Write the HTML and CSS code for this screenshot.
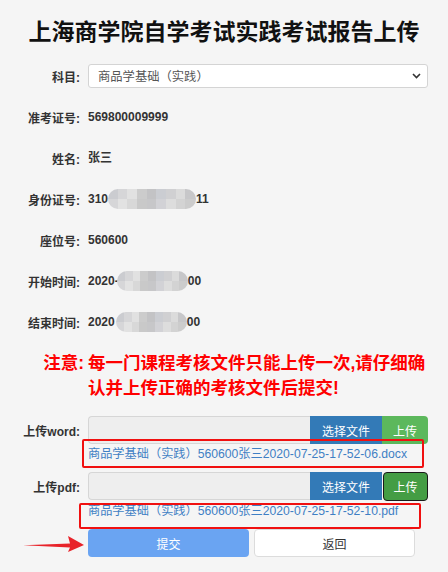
FILE: index.html
```html
<!DOCTYPE html>
<html lang="zh-CN">
<head>
<meta charset="utf-8">
<title>上海商学院自学考试实践考试报告上传</title>
<link rel="stylesheet" href="styles.css">
</head>
<body>
<div class="page">
  <h1 class="title">上海商学院自学考试实践考试报告上传</h1>
  <div class="form">
    <div class="row subject">
      <div class="label">科目:</div>
      <div class="select">
        <span class="select-text">商品学基础<span class="fw">（</span>实践<span class="fw">）</span></span>
        <svg class="chev" width="9" height="6" viewBox="0 0 9 6"><path d="M1 1 L4.5 4.5 L8 1" fill="none" stroke="#333" stroke-width="1.6"/></svg>
      </div>
    </div>
    <div class="row info first">
      <div class="label">准考证号:</div>
      <div class="value">569800009999</div>
    </div>
    <div class="row info">
      <div class="label">姓名:</div>
      <div class="value">张三</div>
    </div>
    <div class="row info">
      <div class="label">身份证号:</div>
      <div class="value">310<span class="mosaic m-id"></span>11</div>
    </div>
    <div class="row info">
      <div class="label">座位号:</div>
      <div class="value">560600</div>
    </div>
    <div class="row info">
      <div class="label">开始时间:</div>
      <div class="value">2020-<span class="mosaic m-start"></span>00</div>
    </div>
    <div class="row info">
      <div class="label">结束时间:</div>
      <div class="value">2020<span class="mosaic m-end"></span>00</div>
    </div>
    <div class="row notice">
      <div class="label">注意:</div>
      <div class="value">每一门课程考核文件只能上传一次,请仔细确认并上传正确的考核文件后提交!</div>
    </div>
    <div class="row upload word">
      <div class="label">上传word:</div>
      <div class="group">
        <div class="file-input"></div>
        <button class="btn btn-choose">选择文件</button>
        <button class="btn btn-upload">上传</button>
      </div>
    </div>
    <div class="row file">
      <div></div>
      <div class="filename fn-word">商品学基础<span class="fw">（</span>实践<span class="fw">）</span>560600张三2020-07-25-17-52-06.docx</div>
    </div>
    <div class="row upload">
      <div class="label">上传pdf:</div>
      <div class="group">
        <div class="file-input"></div>
        <button class="btn btn-choose">选择文件</button>
        <button class="btn btn-upload focused">上传</button>
      </div>
    </div>
    <div class="row file pdf">
      <div></div>
      <div class="filename fn-pdf">商品学基础<span class="fw">（</span>实践<span class="fw">）</span>560600张三2020-07-25-17-52-10.pdf</div>
    </div>
    <div class="row actions">
      <div></div>
      <div class="btns">
        <svg class="arrow" width="62" height="18" viewBox="0 0 62 18"><path d="M0 10.2 L47 8.6 L45 1 L61 10 L45 17 L47 12.4 Z" fill="#e8232a"/></svg>
        <button class="btn btn-submit">提交</button>
        <button class="btn btn-back">返回</button>
      </div>
    </div>
  </div>
</div>
</body>
</html>
```
FILE: styles.css
```css
html, body {
  margin: 0;
  padding: 0;
  background: #f5f5f5;
}
body {
  font-family: "Liberation Sans", "Noto Sans CJK SC", sans-serif;
  color: #333;
  font-size: 12px;
  text-spacing-trim: space-all;
}
.page {
  width: 448px;
}
.title {
  margin: 0;
  padding-top: 16px;
  font-size: 23px;
  line-height: 32px;
  font-weight: bold;
  color: #111;
  text-align: center;
}
.form {
  display: flex;
  flex-direction: column;
}
.row {
  display: grid;
  grid-template-columns: 80px 340px;
  column-gap: 8px;
  align-items: center;
}
.label {
  text-align: right;
  font-weight: bold;
  font-size: 12px;
  color: #333;
  white-space: nowrap;
}
.fw {
  display: inline-block;
  width: 1em;
  text-align: center;
}
.subject {
  margin-top: 16px;
  height: 24px;
}
.select {
  box-sizing: border-box;
  height: 24px;
  background: #fff;
  border: 1px solid #d4d4d4;
  border-radius: 3px;
  display: flex;
  align-items: center;
  justify-content: space-between;
  padding: 0 6px 0 9px;
}
.select-text {
  color: #555;
  font-size: 12.3px;
  white-space: nowrap;
}
.info {
  height: 20px;
  margin-top: 21px;
}
.info.first {
  margin-top: 19px;
}
.value {
  font-weight: bold;
  font-size: 12px;
  line-height: 20px;
  display: flex;
  align-items: center;
  white-space: nowrap;
}
.mosaic {
  display: inline-block;
  height: 20px;
  border-radius: 10px;
  filter: blur(0.6px);
  background:
    linear-gradient(90deg, #cbccd0 0 11%, #d6d6d8 11% 22%, #e1e1e1 22% 33%, #cccccc 33% 44%, #c3c3c5 44% 55%, #cbcdd2 55% 66%, #d0d0d2 66% 77%, #dbdbdb 77% 88%, #c7c7c9 88% 100%) top / 100% 50% no-repeat,
    linear-gradient(90deg, #d6d6d8 0 11%, #e2e2e2 11% 22%, #d8d8d8 22% 33%, #c9c9c9 33% 44%, #c7c7c9 44% 55%, #d2d2d6 55% 66%, #dddddd 66% 77%, #d3d3d3 77% 88%, #cccccc 88% 100%) bottom / 100% 50% no-repeat;
}
.m-id {
  width: 88px;
}
.m-start {
  width: 71px;
  margin-left: -2px;
}
.m-end {
  width: 71px;
  margin-left: 1px;
}
.notice {
  margin-top: 19px;
  align-items: start;
}
.notice .label,
.notice .value {
  color: #ff0000;
  font-size: 17.5px;
  font-weight: bold;
  line-height: 25px;
}
.notice .label {
  margin-right: -4px;
}
.notice .value {
  display: block;
  white-space: normal;
}
.upload {
  height: 28px;
}
.upload.word {
  margin-top: 15px;
}
.group {
  display: flex;
  height: 28px;
}
.file-input {
  flex: 1;
  box-sizing: border-box;
  background: #eeeeee;
  border: 1px solid #d6d6d6;
  border-right: none;
  border-radius: 4px 0 0 4px;
}
.btn {
  font-family: "Liberation Sans", "Noto Sans CJK SC", sans-serif;
  font-size: 12px;
  border: none;
  padding: 0;
  margin: 0;
  color: #fff;
  cursor: pointer;
}
.btn-choose {
  width: 72px;
  background: #337ab7;
}
.btn-upload {
  width: 46px;
  background: #5cb85c;
  border-radius: 0 4px 4px 0;
}
.btn-upload.focused {
  box-sizing: border-box;
  background: #449d44;
  border: 1.5px solid #1a1a1a;
  border-radius: 4px;
  margin-left: 1px;
  width: 45px;
  height: 29px;
}
.file {
  height: 28px;
  align-items: start;
}
.file.pdf {
  height: 29px;
}
.filename {
  position: relative;
  color: #3f7fc4;
  font-size: 12.2px;
  line-height: 20px;
  white-space: nowrap;
}
.fn-pdf {
  line-height: 22px;
}
.filename::after {
  content: "";
  position: absolute;
  box-sizing: border-box;
  border: 2px solid #f01010;
  border-radius: 2px;
}
.fn-word::after {
  top: -5px;
  left: -6px;
  width: 342px;
  height: 29px;
}
.fn-pdf::after {
  top: 3px;
  left: -9px;
  width: 342px;
  height: 26px;
}
.actions {
  height: 28px;
}
.btns {
  position: relative;
  display: flex;
  gap: 5px;
  height: 28px;
}
.btn-submit {
  width: 161px;
  height: 28px;
  background: #6aa4f2;
  border-radius: 4px;
}
.btn-back {
  box-sizing: border-box;
  width: 161px;
  height: 28px;
  background: #fff;
  color: #333;
  border: 1px solid #dcdcdc;
  border-radius: 4px;
}
.arrow {
  position: absolute;
  left: -65px;
  top: 6px;
}
```
